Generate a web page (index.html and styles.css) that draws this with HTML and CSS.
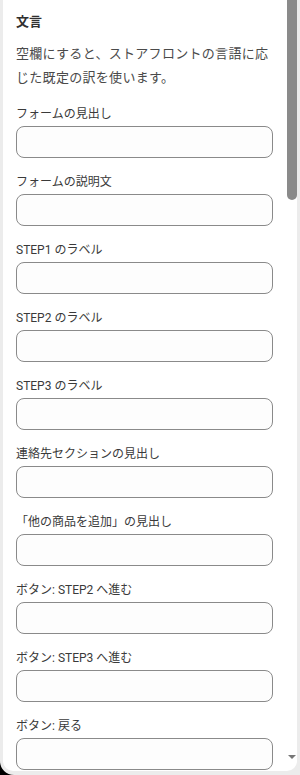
FILE: index.html
```html
<!DOCTYPE html>
<html lang="ja">
<head>
    <meta charset="UTF-8">
    <meta name="viewport" content="width=device-width, initial-scale=1.0">
    <title>文言</title>
    <link rel="stylesheet" href="styles.css">
</head>
<body>
    <div class="frame">
        <div class="panel">
            <h2 class="title">文言</h2>
            <p class="help">空欄にすると、ストアフロントの言語に応じた既定の訳を使います。</p>
            <div class="field">
                <label for="f1">フォームの見出し</label>
                <input type="text" id="f1">
            </div>
            <div class="field">
                <label for="f2">フォームの説明文</label>
                <input type="text" id="f2">
            </div>
            <div class="field">
                <label for="f3">STEP1 のラベル</label>
                <input type="text" id="f3">
            </div>
            <div class="field">
                <label for="f4">STEP2 のラベル</label>
                <input type="text" id="f4">
            </div>
            <div class="field">
                <label for="f5">STEP3 のラベル</label>
                <input type="text" id="f5">
            </div>
            <div class="field">
                <label for="f6">連絡先セクションの見出し</label>
                <input type="text" id="f6">
            </div>
            <div class="field">
                <label for="f7">「他の商品を追加」の見出し</label>
                <input type="text" id="f7">
            </div>
            <div class="field">
                <label for="f8">ボタン: STEP2 へ進む</label>
                <input type="text" id="f8">
            </div>
            <div class="field">
                <label for="f9">ボタン: STEP3 へ進む</label>
                <input type="text" id="f9">
            </div>
            <div class="field">
                <label for="f10">ボタン: 戻る</label>
                <input type="text" id="f10">
            </div>
        </div>
        <div class="scrollbar">
            <div class="thumb"></div>
            <div class="arrow"></div>
        </div>
    </div>
</body>
</html>
```
FILE: styles.css
```css
body {
    margin: 0;
    background-color: #000;
    font-family: Roboto, "Noto Sans CJK JP", sans-serif;
    color: #303030;
}
.frame {
    position: relative;
    height: 775px;
    background-color: #ececec;
    border-bottom-left-radius: 14px;
    overflow: hidden;
}
.panel {
    margin-left: 3px;
    width: 294px;
    height: 771px;
    background-color: #fff;
    border-radius: 0 0 10px 10px;
    padding: 10px 0 0 13px;
    box-sizing: border-box;
    overflow: hidden;
}
.title {
    margin: 0;
    font-size: 13px;
    font-weight: 700;
    line-height: 24px;
}
.help {
    margin: 8px 0 0;
    font-size: 13px;
    letter-spacing: 0.3px;
    line-height: 24px;
    color: #4a4a4a;
    width: 260px;
}
.field {
    margin-top: 14px;
}
label {
    display: block;
    font-size: 12px;
    line-height: 20px;
    margin-bottom: 2px;
    color: #3a3a3a;
}
input {
    display: block;
    width: 257px;
    height: 32px;
    box-sizing: border-box;
    border: 1px solid #8a8a8a;
    border-radius: 8px;
    background-color: #fdfdfd;
    margin: 0;
}
.scrollbar {
    position: absolute;
    top: 0;
    right: 3px;
    width: 10px;
    height: 771px;
}
.thumb {
    width: 10px;
    height: 200px;
    background-color: #8a8a8a;
    border-radius: 0 0 5px 5px;
}
.arrow {
    position: absolute;
    left: 1px;
    bottom: 12px;
    width: 0;
    height: 0;
    border-left: 4px solid transparent;
    border-right: 4px solid transparent;
    border-top: 4px solid #777;
}
```
